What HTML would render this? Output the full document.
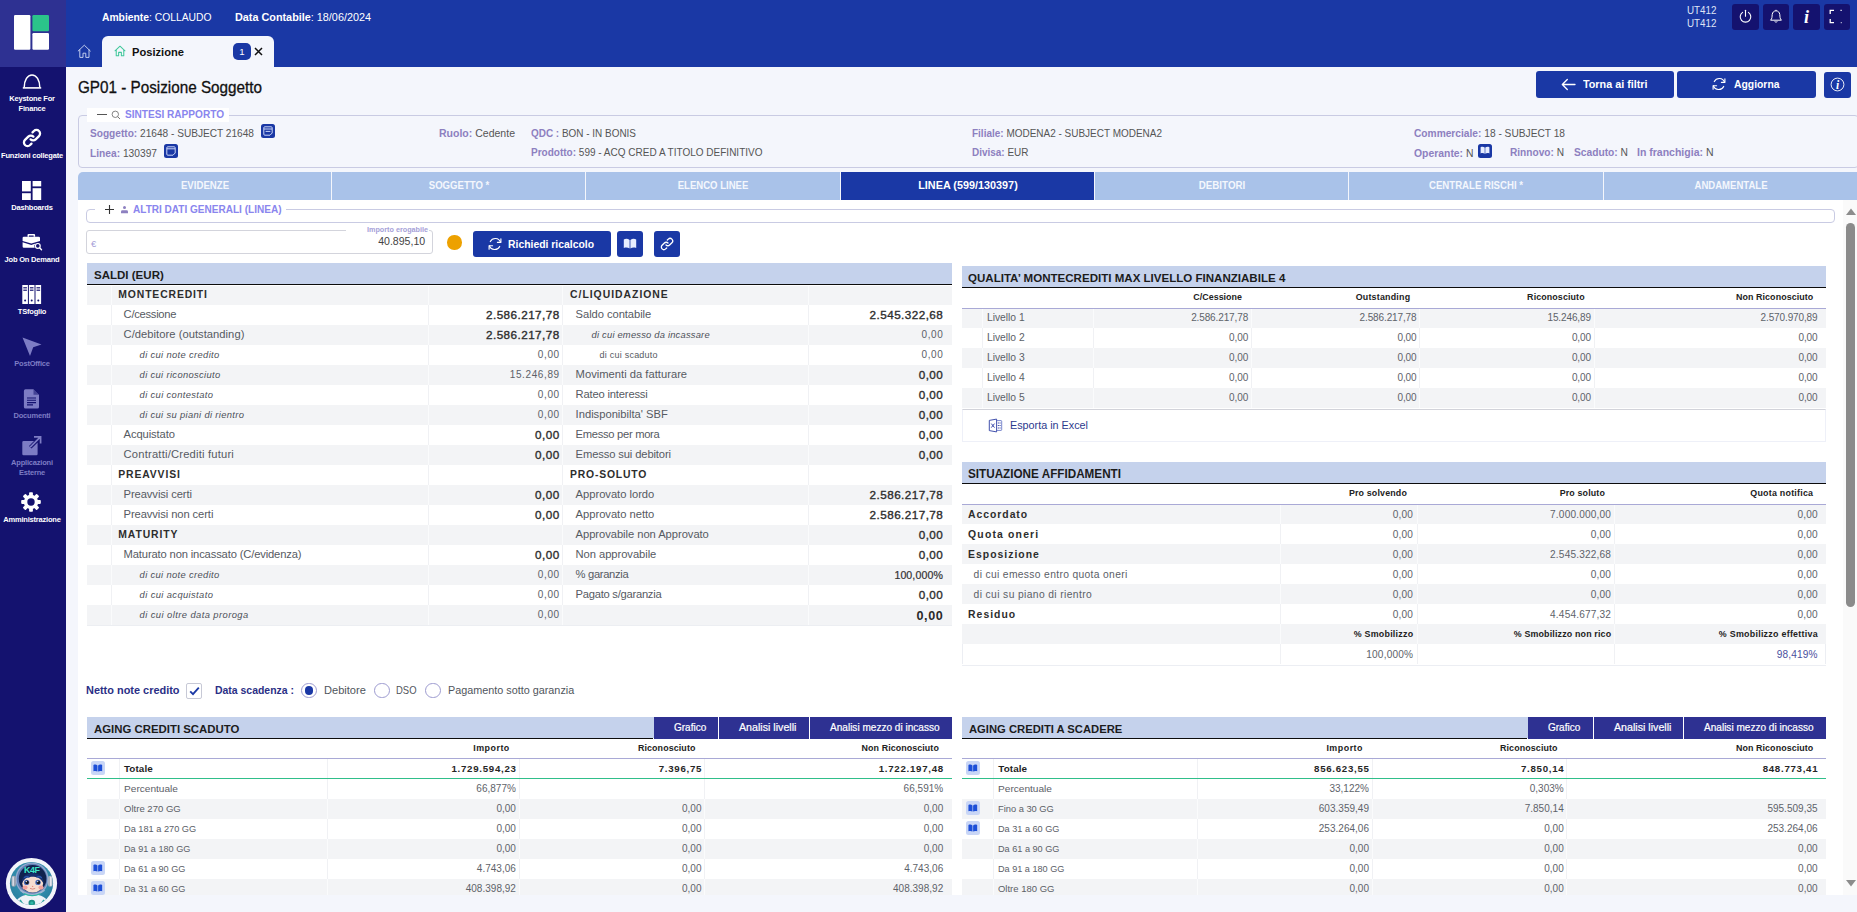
<!DOCTYPE html>
<html lang="it"><head><meta charset="utf-8"><title>GP01 - Posizione Soggetto</title>
<style>
*{box-sizing:border-box}
html,body{margin:0;padding:0}
body{width:1857px;height:912px;overflow:hidden;background:#f4f6fc;font-family:"Liberation Sans",sans-serif;color:#444;position:relative;font-size:11px}
.abs,.b,svg{position:absolute}
#logo{left:0;top:0;width:66px;height:67px;background:#2e3192}
#side{left:0;top:67px;width:66px;height:845px;background:#14126f}
#head{left:66px;top:0;width:1791px;height:67px;background:#1a38a5}
.sbl{position:absolute;left:0;width:64px;text-align:center;color:#fff;font-weight:700;font-size:7.5px;line-height:10px;letter-spacing:-0.2px;white-space:nowrap}
.sbl.dim{color:#7d7cc4}
.hb{position:absolute;top:4px;height:26px;background:#14126f;border-radius:3px}
.btn{position:absolute;background:#1a38a5;border-radius:3px}
.t{position:absolute;white-space:nowrap;line-height:1}
.g{background:#f3f4f6}
.vs{position:absolute;width:1px;background:#fff}
</style></head>
<body>
<div id="logo" class="abs"></div>
<svg class="abs" style="left:0;top:0" width="66" height="67" viewBox="0 0 66 67">
<rect x="14" y="15" width="16.4" height="34.8" rx="1.2" fill="#fff"/>
<rect x="32.4" y="15" width="16.6" height="16.2" rx="1.2" fill="#2bc48a"/>
<rect x="32.4" y="33" width="16.6" height="16.8" rx="1.2" fill="#fff"/>
</svg>
<div id="side" class="abs"></div>
<div id="head" class="abs"></div>
<svg class="abs" style="left:22px;top:73px" width="20" height="20" viewBox="0 0 20 20"><path d="M2.2 14.6 C2.2 7 5.6 2 10 2 C14.4 2 17.8 7 17.8 14.6" fill="none" stroke="#fff" stroke-width="1.5"/><path d="M0.8 14.9 H19.2" stroke="#fff" stroke-width="1.6" fill="none"/></svg>
<div class="sbl" style="top:94px">Keystone For<br>Finance</div>
<svg class="abs" style="left:22px;top:128px" width="20" height="20" viewBox="0 0 20 20"><g fill="none" stroke="#fff" stroke-width="2.3" stroke-linecap="round"><path d="M8.6 11.4 a3.6 3.6 0 0 0 5.1 0 l3.3-3.3 a3.6 3.6 0 0 0-5.1-5.1 l-1.4 1.4"/><path d="M11.4 8.6 a3.6 3.6 0 0 0-5.1 0 l-3.3 3.3 a3.6 3.6 0 0 0 5.1 5.1 l1.4-1.4"/></g></svg>
<div class="sbl" style="top:151px">Funzioni collegate</div>
<svg class="abs" style="left:22px;top:181px" width="20" height="20" viewBox="0 0 20 20"><g fill="#fff"><rect x="0" y="0" width="8.8" height="10.4"/><rect x="10.6" y="0" width="8.6" height="5.4"/><rect x="0" y="12.2" width="8.8" height="6.8"/><rect x="10.6" y="7.2" width="8.6" height="11.8"/></g></svg>
<div class="sbl" style="top:203px">Dashboards</div>
<svg class="abs" style="left:22px;top:233px" width="21" height="20" viewBox="0 0 20 20"><g fill="#fff"><path d="M6 1 h5.6 a1 1 0 0 1 1 1 V3.8 h-1.5 V2.5 h-4.6 V3.8 H5 V2 a1 1 0 0 1 1-1z"/><path d="M1.4 3.8 h14.8 a1.3 1.3 0 0 1 1.3 1.3 V8 L8.8 10.6 L0.1 8 V5.1 A1.3 1.3 0 0 1 1.4 3.8z"/><path d="M0.1 9.3 L8.8 11.9 L13 10.6 a3.6 3.6 0 0 0 -0.8 4.2 H1.4 a1.3 1.3 0 0 1-1.3-1.3z"/></g><circle cx="15.3" cy="12.9" r="2.4" fill="#14126f" stroke="#fff" stroke-width="1.2"/><path d="M17.1 14.8 L19 16.8" stroke="#fff" stroke-width="1.4" stroke-linecap="round"/></svg>
<div class="sbl" style="top:255px">Job On Demand</div>
<svg class="abs" style="left:22px;top:285px" width="20" height="20" viewBox="0 0 20 20"><rect x="0.3" y="0" width="5.6" height="19" fill="#fff"/><rect x="1.3" y="2.2" width="3.6" height="1.2" fill="#14126f"/><rect x="1.3" y="4.6" width="3.6" height="1.2" fill="#14126f"/><circle cx="3.0999999999999996" cy="15.5" r="1" fill="#14126f"/><rect x="6.8999999999999995" y="0" width="5.6" height="19" fill="#fff"/><rect x="7.8999999999999995" y="2.2" width="3.6" height="1.2" fill="#14126f"/><rect x="7.8999999999999995" y="4.6" width="3.6" height="1.2" fill="#14126f"/><circle cx="9.7" cy="15.5" r="1" fill="#14126f"/><rect x="13.5" y="0" width="5.6" height="19" fill="#fff"/><rect x="14.5" y="2.2" width="3.6" height="1.2" fill="#14126f"/><rect x="14.5" y="4.6" width="3.6" height="1.2" fill="#14126f"/><circle cx="16.3" cy="15.5" r="1" fill="#14126f"/></svg>
<div class="sbl" style="top:307px">TSfoglio</div>
<svg class="abs" style="left:22px;top:337px" width="20" height="20" viewBox="0 0 20 20"><path d="M0.5 0.5 L19.5 7.5 L11.2 10.3 L8 19 Z" fill="#7d7cc4"/></svg>
<div class="sbl dim" style="top:359px">PostOffice</div>
<svg class="abs" style="left:22px;top:389px" width="20" height="20" viewBox="0 0 20 20"><path d="M3.5 0.3 H11.5 L17 5.8 V18 a1.6 1.6 0 0 1-1.6 1.6 H3.5 A1.6 1.6 0 0 1 1.9 18 V1.9 A1.6 1.6 0 0 1 3.5 0.3z" fill="#7d7cc4"/><path d="M11.5 0.3 V5.8 H17" fill="#14126f" opacity="0.55"/><g stroke="#14126f" stroke-width="1.1"><path d="M5 9 h9M5 11.3 h9M5 13.6 h9M5 15.9 h6"/></g></svg>
<div class="sbl dim" style="top:411px">Documenti</div>
<svg class="abs" style="left:22px;top:436px" width="20" height="20" viewBox="0 0 20 20"><path d="M1.6 5 H12 L7 10 L9.5 12.5 L15.6 6.4 V18 a1.3 1.3 0 0 1-1.3 1.3 H1.6 A1.3 1.3 0 0 1 0.3 18 V6.3 A1.3 1.3 0 0 1 1.6 5z" fill="#7d7cc4"/><path d="M8.2 11.2 L18.2 1.2 M12 0.9 H18.6 V7.5" fill="none" stroke="#7d7cc4" stroke-width="1.7"/></svg>
<div class="sbl dim" style="top:458px">Applicazioni<br>Esterne</div>
<svg class="abs" style="left:21px;top:492px" width="20" height="20" viewBox="0 0 20 20"><rect x="8.1" y="0.2" width="3.8" height="5" rx="0.8" transform="rotate(0 10 10)" fill="#fff"/><rect x="8.1" y="0.2" width="3.8" height="5" rx="0.8" transform="rotate(45 10 10)" fill="#fff"/><rect x="8.1" y="0.2" width="3.8" height="5" rx="0.8" transform="rotate(90 10 10)" fill="#fff"/><rect x="8.1" y="0.2" width="3.8" height="5" rx="0.8" transform="rotate(135 10 10)" fill="#fff"/><rect x="8.1" y="0.2" width="3.8" height="5" rx="0.8" transform="rotate(180 10 10)" fill="#fff"/><rect x="8.1" y="0.2" width="3.8" height="5" rx="0.8" transform="rotate(225 10 10)" fill="#fff"/><rect x="8.1" y="0.2" width="3.8" height="5" rx="0.8" transform="rotate(270 10 10)" fill="#fff"/><rect x="8.1" y="0.2" width="3.8" height="5" rx="0.8" transform="rotate(315 10 10)" fill="#fff"/><circle cx="10" cy="10" r="7.2" fill="#fff"/><circle cx="10" cy="10" r="3.7" fill="#14126f"/><circle cx="10" cy="10" r="2" fill="none" stroke="#fff" stroke-width="0"/></svg>
<div class="sbl" style="top:515px">Amministrazione</div>
<svg style="left:5px;top:857px" width="53" height="53" viewBox="0 0 53 53">
<defs><clipPath id="avc"><circle cx="26.5" cy="26.5" r="21.6"/></clipPath>
<radialGradient id="avg" cx="50%" cy="40%" r="60%"><stop offset="0" stop-color="#3aa0bf"/><stop offset="1" stop-color="#2a7f9f"/></radialGradient></defs>
<circle cx="26.5" cy="26.5" r="25.6" fill="#f3f5fb"/>
<circle cx="26.5" cy="26.5" r="21.6" fill="url(#avg)"/>
<g clip-path="url(#avc)">
<path d="M8 53 C9 42 16 37.5 27 37.5 C38 37.5 45 42 46 53z" fill="#eef2f7"/>
<path d="M15 43 l4 6 M39 43 l-4 6" stroke="#2aa6a0" stroke-width="1.6"/>
<path d="M13.5 46 l2 5 M40.5 46 l-2 5" stroke="#1d3f7a" stroke-width="1.6"/>
<circle cx="26.8" cy="46" r="3.3" fill="#1f8f86"/><circle cx="26.8" cy="46" r="1.6" fill="#2fb7a6"/>
<circle cx="27" cy="22" r="16.6" fill="#93a9cf"/>
<circle cx="27" cy="22" r="15.2" fill="#5f7fb5"/>
<circle cx="27.6" cy="21.8" r="13.8" fill="#10224e"/>
<rect x="6.4" y="18.8" width="4.6" height="11" rx="2.2" fill="#9aa3b3"/><rect x="7.4" y="19.6" width="1.6" height="9.4" rx="0.8" fill="#d5dae4"/>
<rect x="43" y="18.8" width="4.6" height="11" rx="2.2" fill="#aab2c2"/><rect x="45" y="19.6" width="1.6" height="9.4" rx="0.8" fill="#e3e7ef"/>
<ellipse cx="27.7" cy="26.4" rx="10.4" ry="9.2" fill="#f6dccf"/>
<path d="M16.8 26 C16 12.5 39.4 12.5 38.6 26 C35 20.6 31 19.8 27.7 19.8 C24 19.8 20 20.6 16.8 26z" fill="#16306e"/>
<path d="M19 20.6 q3-2 5.4 0 M31.4 20.4 q3-1.8 5.4 0.4" stroke="#2c58b0" stroke-width="1.1" fill="none"/>
<circle cx="21.6" cy="25.4" r="2.7" fill="#4a6fc0"/><circle cx="33" cy="25.4" r="2.7" fill="#4a6fc0"/>
<circle cx="22" cy="25.4" r="1.8" fill="#14161f"/><circle cx="33.4" cy="25.4" r="1.8" fill="#14161f"/>
<circle cx="21.3" cy="24.6" r="0.7" fill="#fff"/><circle cx="32.7" cy="24.6" r="0.7" fill="#fff"/>
<ellipse cx="20" cy="30.6" rx="2.6" ry="2.1" fill="#f0a39e"/><ellipse cx="36" cy="30.6" rx="2.6" ry="2.1" fill="#f0a39e"/>
<circle cx="27.6" cy="29.4" r="0.7" fill="#e98d86"/>
<path d="M25 31.4 Q27.6 32.8 30.2 31.4" stroke="#cf6a63" stroke-width="0.7" fill="none"/>
<path d="M15.4 33 Q27 42.5 39.4 33" stroke="#9fb4d2" stroke-width="2" fill="none"/>
<path d="M19 36.6 Q27 40.6 35.6 36.6" stroke="#2fb7a6" stroke-width="1.2" fill="none"/>
</g>
<text x="26.8" y="16.2" text-anchor="middle" font-family="Liberation Sans, sans-serif" font-weight="700" font-size="8.8" fill="#3fe6c8" letter-spacing="-0.3">K4F</text>
</svg>
<div class="t" style="left:101.5px;top:13px;font-size:10.4px;color:#fff;transform:scaleX(0.9929);transform-origin:0 50%;"><b>Ambiente</b>: COLLAUDO</div>
<div class="t" style="left:235px;top:13px;font-size:10.4px;color:#fff;transform:scaleX(1.0419);transform-origin:0 50%;"><b>Data Contabile</b>: 18/06/2024</div>
<svg style="left:77px;top:44px" width="14" height="14" viewBox="0 0 14 14"><path d="M1.2 7 L7.3 1.2 L13.3 7 M2.8 5.8 V13.4 H6 V9.2 H8.8 V13.4 H12 V5.8" fill="none" stroke="#d3dbf5" stroke-width="0.9" stroke-linejoin="round" stroke-linecap="round"/></svg>
<div class="abs" style="left:102px;top:36px;width:172px;height:31px;background:#f4f6fc;border-radius:6px 6px 0 0"></div>
<svg style="left:114px;top:45px" width="12" height="12" viewBox="0 0 14 14"><path d="M1.2 6.8 L7 1.4 L12.8 6.8 M2.6 5.8 V12.6 H5.4 V8.6 H8.6 V12.6 H11.4 V5.8" fill="none" stroke="#3fc79a" stroke-width="1.2" stroke-linejoin="round" stroke-linecap="round"/></svg>
<div class="t" style="left:132px;top:47px;font-size:11.2px;font-weight:700;color:#111;transform:scaleX(0.9958);transform-origin:0 50%;">Posizione</div>
<div class="abs" style="left:233px;top:43px;width:18px;height:17px;background:#1a38a5;border-radius:5px"></div>
<div class="t" style="left:242px;top:47px;font-size:9.6px;color:#fff;transform:translateX(-50%);transform-origin:50% 50%;">1</div>
<svg style="left:254px;top:47px" width="9" height="9" viewBox="0 0 9 9"><path d="M1 1 L8 8 M8 1 L1 8" stroke="#111" stroke-width="1.5"/></svg>
<div class="t" style="left:1686.5px;top:5px;font-size:11px;color:#dfe4f6;transform:scaleX(0.8931);transform-origin:0 50%;">UT412</div>
<div class="t" style="left:1686.5px;top:18px;font-size:11px;color:#dfe4f6;transform:scaleX(0.8931);transform-origin:0 50%;">UT412</div>
<div class="hb" style="left:1732px;width:27px"></div>
<div class="hb" style="left:1763px;width:26px"></div>
<div class="hb" style="left:1793px;width:27px"></div>
<div class="hb" style="left:1824px;width:26px"></div>
<svg style="left:1738px;top:9px" width="15" height="15" viewBox="0 0 15 15"><path d="M4.6 3.4 A5.3 5.3 0 1 0 10.4 3.4" fill="none" stroke="#fff" stroke-width="1.1" stroke-linecap="round"/><path d="M7.5 1.2 V7.2" stroke="#fff" stroke-width="1.1" stroke-linecap="round"/></svg>
<svg style="left:1769px;top:9px" width="14" height="15" viewBox="0 0 14 15"><path d="M1.6 11.2 C3.2 9.6 3 7.6 3.2 5.6 C3.5 3.2 5 1.8 7 1.8 C9 1.8 10.5 3.2 10.8 5.6 C11 7.6 10.8 9.6 12.4 11.2 Z" fill="none" stroke="#fff" stroke-width="1" stroke-linejoin="round"/><path d="M5.8 12.4 A1.3 1.3 0 0 0 8.2 12.4" fill="none" stroke="#fff" stroke-width="1"/><path d="M7 0.8 V1.8" stroke="#fff" stroke-width="1"/></svg>
<div class="t" style="left:1806.5px;top:8px;font-size:18px;font-weight:700;color:#fff;font-style:italic;transform:translateX(-50%);transform-origin:50% 50%;font-family:'Liberation Serif',serif;">i</div>
<svg style="left:1829px;top:9px" width="16" height="15" viewBox="0 0 16 15"><path d="M1.2 5 V1.4 H5 M11.5 1.4 H12.7 M1.2 10 V13.6 H5 M11.8 13.6 H12.6" fill="none" stroke="#fff" stroke-width="1.3"/></svg>
<div class="t" style="left:78px;top:79px;font-size:16.2px;color:#111;transform:scaleX(0.9422);transform-origin:0 50%;-webkit-text-stroke:0.3px #111;">GP01 - Posizione Soggetto</div>
<div class="b" style="left:1536px;top:71px;width:138px;height:27px;background:#1a38a5;border-radius:3px"></div>
<div class="b" style="left:1677px;top:71px;width:139px;height:27px;background:#1a38a5;border-radius:3px"></div>
<div class="b" style="left:1824px;top:72px;width:27px;height:26px;background:#1a38a5;border-radius:3px"></div>
<svg style="left:1561px;top:78px" width="15" height="13" viewBox="0 0 15 13"><path d="M14 6.5 H1.5 M6.3 1.5 L1.3 6.5 L6.3 11.5" fill="none" stroke="#fff" stroke-width="1.3" stroke-linecap="round" stroke-linejoin="round"/></svg>
<div class="t" style="left:1583px;top:79px;font-size:11px;font-weight:700;color:#fff;transform:scaleX(0.9801);transform-origin:0 50%;">Torna ai filtri</div>
<svg style="left:1712px;top:77px" width="14" height="14" viewBox="0 0 14 14"><path d="M12.6 5.2 A5.6 5.6 0 0 0 2.3 4.6 M1.4 8.8 A5.6 5.6 0 0 0 11.7 9.4" fill="none" stroke="#fff" stroke-width="1.15" stroke-linecap="round"/><path d="M12.9 1.8 V5.3 H9.4 M1.1 12.2 V8.7 H4.6" fill="none" stroke="#fff" stroke-width="1.15" stroke-linecap="round" stroke-linejoin="round"/></svg>
<div class="t" style="left:1734px;top:79px;font-size:11px;font-weight:700;color:#fff;transform:scaleX(0.9424);transform-origin:0 50%;">Aggiorna</div>
<svg style="left:1830px;top:77px" width="15" height="15" viewBox="0 0 15 15"><circle cx="7.5" cy="7.5" r="6.4" fill="none" stroke="#fff" stroke-width="0.9"/></svg>
<div class="t" style="left:1837.6px;top:80px;font-size:11.5px;font-weight:700;color:#fff;font-style:italic;transform:translateX(-50%);transform-origin:50% 50%;font-family:'Liberation Serif',serif;">i</div>
<div class="b" style="left:78px;top:115px;width:1781px;height:53px;border:1px solid #c9cbe3;border-radius:4px"></div>
<div class="b" style="left:87px;top:108px;width:142px;height:14px;background:#fff;"></div>
<div class="b" style="left:97px;top:113.6px;width:9.5px;height:1.3px;background:#555;"></div>
<svg style="left:111px;top:109.5px" width="10" height="10" viewBox="0 0 10 10"><circle cx="4.3" cy="4.3" r="3.2" fill="none" stroke="#666" stroke-width="0.8"/><path d="M6.7 6.7 L9 9" stroke="#666" stroke-width="0.9"/></svg>
<div class="t" style="left:125px;top:109px;font-size:11px;font-weight:700;color:#8a86ee;transform:scaleX(0.9168);transform-origin:0 50%;">SINTESI RAPPORTO</div>
<div class="t" style="left:90px;top:128px;font-size:10.6px;color:#555;transform:scaleX(0.9549);transform-origin:0 50%;"><b style="color:#8d80c0;font-weight:700">Soggetto:</b> <span>21648 - SUBJECT 21648</span></div>
<div class="t" style="left:90px;top:148px;font-size:10.6px;color:#555;transform:scaleX(0.9638);transform-origin:0 50%;"><b style="color:#8d80c0;font-weight:700">Linea:</b> <span>130397</span></div>
<div class="t" style="left:438.5px;top:128px;font-size:10.6px;color:#555;transform:scaleX(0.9927);transform-origin:0 50%;"><b style="color:#8d80c0;font-weight:700">Ruolo:</b> <span>Cedente</span></div>
<div class="t" style="left:531px;top:128px;font-size:10.6px;color:#555;transform:scaleX(0.9388);transform-origin:0 50%;"><b style="color:#8d80c0;font-weight:700">QDC :</b> <span>BON - IN BONIS</span></div>
<div class="t" style="left:531px;top:147px;font-size:10.6px;color:#555;transform:scaleX(0.9445);transform-origin:0 50%;"><b style="color:#8d80c0;font-weight:700">Prodotto:</b> <span>599 - ACQ CRED A TITOLO DEFINITIVO</span></div>
<div class="t" style="left:972px;top:128px;font-size:10.6px;color:#555;transform:scaleX(0.9418);transform-origin:0 50%;"><b style="color:#8d80c0;font-weight:700">Filiale:</b> <span>MODENA2 - SUBJECT MODENA2</span></div>
<div class="t" style="left:972px;top:147px;font-size:10.6px;color:#555;transform:scaleX(0.9404);transform-origin:0 50%;"><b style="color:#8d80c0;font-weight:700">Divisa:</b> <span>EUR</span></div>
<div class="t" style="left:1413.5px;top:128px;font-size:10.6px;color:#555;transform:scaleX(0.9616);transform-origin:0 50%;"><b style="color:#8d80c0;font-weight:700">Commerciale:</b> <span>18 - SUBJECT 18</span></div>
<div class="t" style="left:1413.5px;top:148px;font-size:10.6px;color:#555;transform:scaleX(0.9809);transform-origin:0 50%;"><b style="color:#8d80c0;font-weight:700">Operante:</b> <span>N</span></div>
<div class="t" style="left:1509.5px;top:147px;font-size:10.6px;color:#555;transform:scaleX(0.9555);transform-origin:0 50%;"><b style="color:#8d80c0;font-weight:700">Rinnovo:</b> <span>N</span></div>
<div class="t" style="left:1573.5px;top:147px;font-size:10.6px;color:#555;transform:scaleX(0.9654);transform-origin:0 50%;"><b style="color:#8d80c0;font-weight:700">Scaduto:</b> <span>N</span></div>
<div class="t" style="left:1637px;top:147px;font-size:10.6px;color:#555;transform:scaleX(0.9919);transform-origin:0 50%;"><b style="color:#8d80c0;font-weight:700">In franchigia:</b> <span>N</span></div>
<div class="b" style="left:261px;top:124px;width:14px;height:14px;background:#1a38a5;border-radius:2.5px"></div>
<svg style="left:263px;top:126px" width="10" height="10" viewBox="0 0 10 10"><path d="M0.8 1.8 a1 1 0 0 1 1-1 h6.4 a1 1 0 0 1 1 1 V7 L7 9.2 H1.8 a1 1 0 0 1 -1-1z" fill="none" stroke="#dfe6ff" stroke-width="0.9"/><path d="M1 3 H9 M2.6 5.4 H7.4" stroke="#dfe6ff" stroke-width="0.9"/></svg>
<div class="b" style="left:164px;top:144px;width:14px;height:14px;background:#1a38a5;border-radius:2.5px"></div>
<svg style="left:166px;top:146px" width="10" height="10" viewBox="0 0 10 10"><path d="M0.8 1.8 a1 1 0 0 1 1-1 h6.4 a1 1 0 0 1 1 1 V7 L7 9.2 H1.8 a1 1 0 0 1 -1-1z" fill="none" stroke="#dfe6ff" stroke-width="0.9"/><path d="M1 2.8 H9" stroke="#dfe6ff" stroke-width="0.9"/></svg>
<div class="b" style="left:1478px;top:143.5px;width:14px;height:14px;background:#1a38a5;border-radius:2.5px"></div>
<svg style="left:1480px;top:146.0px" width="10" height="9" viewBox="0 0 10 9"><path d="M0.6 1.2 C2 0.6 3.6 0.7 4.7 1.6 V7.8 C3.6 7 2 6.9 0.6 7.4z M9.4 1.2 C8 0.6 6.4 0.7 5.3 1.6 V7.8 C6.4 7 8 6.9 9.4 7.4z" fill="#e8eeff"/></svg>
<div class="b" style="left:78px;top:172px;width:253px;height:28px;background:#a9c2e9;border-radius:5px 0 0 0;"></div>
<div class="t" style="left:204.5px;top:179px;font-size:11.6px;font-weight:700;color:#f4f7fd;transform:translateX(-50%) scaleX(0.8313);transform-origin:50% 50%;">EVIDENZE</div>
<div class="b" style="left:332px;top:172px;width:253px;height:28px;background:#a9c2e9;"></div>
<div class="t" style="left:458.5px;top:179px;font-size:11.6px;font-weight:700;color:#f4f7fd;transform:translateX(-50%) scaleX(0.8261);transform-origin:50% 50%;">SOGGETTO *</div>
<div class="b" style="left:586px;top:172px;width:254px;height:28px;background:#a9c2e9;"></div>
<div class="t" style="left:713.0px;top:179px;font-size:11.6px;font-weight:700;color:#f4f7fd;transform:translateX(-50%) scaleX(0.8228);transform-origin:50% 50%;">ELENCO LINEE</div>
<div class="b" style="left:841px;top:172px;width:253px;height:28px;background:#1a38a5;"></div>
<div class="t" style="left:967.5px;top:179px;font-size:11.6px;font-weight:700;color:#fff;transform:translateX(-50%) scaleX(0.9339);transform-origin:50% 50%;">LINEA (599/130397)</div>
<div class="b" style="left:1095px;top:172px;width:253px;height:28px;background:#a9c2e9;"></div>
<div class="t" style="left:1221.5px;top:179px;font-size:11.6px;font-weight:700;color:#f4f7fd;transform:translateX(-50%) scaleX(0.8426);transform-origin:50% 50%;">DEBITORI</div>
<div class="b" style="left:1349px;top:172px;width:254px;height:28px;background:#a9c2e9;"></div>
<div class="t" style="left:1476.0px;top:179px;font-size:11.6px;font-weight:700;color:#f4f7fd;transform:translateX(-50%) scaleX(0.8291);transform-origin:50% 50%;">CENTRALE RISCHI *</div>
<div class="b" style="left:1604px;top:172px;width:254px;height:28px;background:#a9c2e9;"></div>
<div class="t" style="left:1731.0px;top:179px;font-size:11.6px;font-weight:700;color:#f4f7fd;transform:translateX(-50%) scaleX(0.8233);transform-origin:50% 50%;">ANDAMENTALE</div>
<div class="b" style="left:78px;top:200px;width:1765px;height:695px;background:#fff;"></div>
<div class="b" style="left:1843.3px;top:200px;width:13.7px;height:695px;background:#fafafa;"></div>
<svg style="left:1845.5px;top:208px" width="10" height="7" viewBox="0 0 10 7"><path d="M0 7 L5 0.4 L10 7z" fill="#8c8c8c"/></svg>
<div class="b" style="left:1846px;top:223px;width:9px;height:384px;background:#8b8b8b;border-radius:4.5px"></div>
<svg style="left:1845.5px;top:880px" width="10" height="7" viewBox="0 0 10 7"><path d="M0 0 L5 6.6 L10 0z" fill="#8c8c8c"/></svg>
<div class="b" style="left:86px;top:209px;width:1749px;height:14px;border:1px solid #c9cbe3;border-radius:4px"></div>
<div class="b" style="left:95px;top:203px;width:191px;height:13px;background:#fff;"></div>
<svg style="left:104px;top:204px" width="11" height="11" viewBox="0 0 11 11"><path d="M5.5 1 V10 M1 5.5 H10" stroke="#333" stroke-width="1.1"/></svg>
<svg style="left:120px;top:205px" width="9" height="9" viewBox="0 0 9 9"><circle cx="4.5" cy="2.6" r="1.5" fill="#8d80c0"/><path d="M1 8.2 V6.6 a1.4 1.4 0 0 1 1.4-1.4 h4.2 a1.4 1.4 0 0 1 1.4 1.4 V8.2z" fill="#8d80c0"/></svg>
<div class="t" style="left:132.6px;top:204px;font-size:11px;font-weight:700;color:#8a86ee;transform:scaleX(0.9124);transform-origin:0 50%;">ALTRI DATI GENERALI (LINEA)</div>
<div class="b" style="left:86px;top:229.5px;width:347px;height:24px;border:1px solid #d3d4dc;border-radius:3px;background:#fff"></div>
<div class="b" style="left:346px;top:228px;width:83px;height:4px;background:#fff;"></div>
<div class="t" style="left:367px;top:226px;font-size:7.2px;font-weight:700;color:#a69fd8;transform:scaleX(1.0049);transform-origin:0 50%;">Importo erogabile</div>
<div class="t" style="left:91px;top:239px;font-size:9.5px;color:#a69fd8;">€</div>
<div class="t" style="right:1432px;top:236px;font-size:10.6px;color:#444;transform:scaleX(0.997);transform-origin:100% 50%;">40.895,10</div>
<div class="b" style="left:447.2px;top:235.2px;width:14.4px;height:14.4px;border-radius:50%;background:#eda100"></div>
<div class="b" style="left:473px;top:231px;width:138px;height:26px;background:#1a38a5;border-radius:3px"></div>
<svg style="left:488px;top:237px" width="14" height="14" viewBox="0 0 14 14"><path d="M12.6 5.2 A5.6 5.6 0 0 0 2.3 4.6 M1.4 8.8 A5.6 5.6 0 0 0 11.7 9.4" fill="none" stroke="#fff" stroke-width="1.15" stroke-linecap="round"/><path d="M12.9 1.8 V5.3 H9.4 M1.1 12.2 V8.7 H4.6" fill="none" stroke="#fff" stroke-width="1.15" stroke-linecap="round" stroke-linejoin="round"/></svg>
<div class="t" style="left:508.3px;top:238px;font-size:11.7px;font-weight:700;color:#fff;transform:scaleX(0.8886);transform-origin:0 50%;">Richiedi ricalcolo</div>
<div class="b" style="left:617px;top:231px;width:26px;height:26px;background:#1a38a5;border-radius:3px"></div>
<svg style="left:623px;top:238px" width="14" height="12" viewBox="0 0 14 12"><path d="M0.8 1.4 C2.8 0.5 5 0.7 6.6 2 V10.6 C5 9.4 2.8 9.3 0.8 10z M13.2 1.4 C11.2 0.5 9 0.7 7.4 2 V10.6 C9 9.4 11.2 9.3 13.2 10z" fill="#e8eeff"/></svg>
<div class="b" style="left:654px;top:231px;width:26px;height:26px;background:#1a38a5;border-radius:3px"></div>
<svg style="left:660px;top:237px" width="14" height="14" viewBox="0 0 20 20"><g fill="none" stroke="#fff" stroke-width="1.9" stroke-linecap="round"><path d="M8.6 11.4 a3.6 3.6 0 0 0 5.1 0 l3.3-3.3 a3.6 3.6 0 0 0-5.1-5.1 l-1.4 1.4"/><path d="M11.4 8.6 a3.6 3.6 0 0 0-5.1 0 l-3.3 3.3 a3.6 3.6 0 0 0 5.1 5.1 l1.4-1.4"/></g></svg>
<div class="b" style="left:87px;top:263px;width:865px;height:21px;background:#c5d2ec;"></div>
<div class="b" style="left:87px;top:284px;width:865px;height:1px;background:#0c0c0c;"></div>
<div class="t" style="left:94px;top:269px;font-size:11.7px;font-weight:700;color:#1c1c1c;transform:scaleX(0.9861);transform-origin:0 50%;">SALDI (EUR)</div>
<div class="b" style="left:87px;top:286px;width:865px;height:19px;background:#f3f4f6;"></div>
<div class="vs" style="left:111px;top:286px;height:19px;background:#fafbfc"></div>
<div class="vs" style="left:428px;top:286px;height:19px;background:#fafbfc"></div>
<div class="vs" style="left:562px;top:286px;height:19px;background:#fafbfc"></div>
<div class="vs" style="left:808px;top:286px;height:19px;background:#fafbfc"></div>
<div class="vs" style="left:111px;top:305px;height:20px;background:#f0f1f4"></div>
<div class="vs" style="left:428px;top:305px;height:20px;background:#f0f1f4"></div>
<div class="vs" style="left:562px;top:305px;height:20px;background:#f0f1f4"></div>
<div class="vs" style="left:808px;top:305px;height:20px;background:#f0f1f4"></div>
<div class="b" style="left:87px;top:325px;width:865px;height:20px;background:#f3f4f6;"></div>
<div class="vs" style="left:111px;top:325px;height:20px;background:#fafbfc"></div>
<div class="vs" style="left:428px;top:325px;height:20px;background:#fafbfc"></div>
<div class="vs" style="left:562px;top:325px;height:20px;background:#fafbfc"></div>
<div class="vs" style="left:808px;top:325px;height:20px;background:#fafbfc"></div>
<div class="vs" style="left:111px;top:345px;height:20px;background:#f0f1f4"></div>
<div class="vs" style="left:428px;top:345px;height:20px;background:#f0f1f4"></div>
<div class="vs" style="left:562px;top:345px;height:20px;background:#f0f1f4"></div>
<div class="vs" style="left:808px;top:345px;height:20px;background:#f0f1f4"></div>
<div class="b" style="left:87px;top:365px;width:865px;height:20px;background:#f3f4f6;"></div>
<div class="vs" style="left:111px;top:365px;height:20px;background:#fafbfc"></div>
<div class="vs" style="left:428px;top:365px;height:20px;background:#fafbfc"></div>
<div class="vs" style="left:562px;top:365px;height:20px;background:#fafbfc"></div>
<div class="vs" style="left:808px;top:365px;height:20px;background:#fafbfc"></div>
<div class="vs" style="left:111px;top:385px;height:20px;background:#f0f1f4"></div>
<div class="vs" style="left:428px;top:385px;height:20px;background:#f0f1f4"></div>
<div class="vs" style="left:562px;top:385px;height:20px;background:#f0f1f4"></div>
<div class="vs" style="left:808px;top:385px;height:20px;background:#f0f1f4"></div>
<div class="b" style="left:87px;top:405px;width:865px;height:20px;background:#f3f4f6;"></div>
<div class="vs" style="left:111px;top:405px;height:20px;background:#fafbfc"></div>
<div class="vs" style="left:428px;top:405px;height:20px;background:#fafbfc"></div>
<div class="vs" style="left:562px;top:405px;height:20px;background:#fafbfc"></div>
<div class="vs" style="left:808px;top:405px;height:20px;background:#fafbfc"></div>
<div class="vs" style="left:111px;top:425px;height:20px;background:#f0f1f4"></div>
<div class="vs" style="left:428px;top:425px;height:20px;background:#f0f1f4"></div>
<div class="vs" style="left:562px;top:425px;height:20px;background:#f0f1f4"></div>
<div class="vs" style="left:808px;top:425px;height:20px;background:#f0f1f4"></div>
<div class="b" style="left:87px;top:445px;width:865px;height:20px;background:#f3f4f6;"></div>
<div class="vs" style="left:111px;top:445px;height:20px;background:#fafbfc"></div>
<div class="vs" style="left:428px;top:445px;height:20px;background:#fafbfc"></div>
<div class="vs" style="left:562px;top:445px;height:20px;background:#fafbfc"></div>
<div class="vs" style="left:808px;top:445px;height:20px;background:#fafbfc"></div>
<div class="vs" style="left:111px;top:465px;height:20px;background:#f0f1f4"></div>
<div class="vs" style="left:428px;top:465px;height:20px;background:#f0f1f4"></div>
<div class="vs" style="left:562px;top:465px;height:20px;background:#f0f1f4"></div>
<div class="vs" style="left:808px;top:465px;height:20px;background:#f0f1f4"></div>
<div class="b" style="left:87px;top:485px;width:865px;height:20px;background:#f3f4f6;"></div>
<div class="vs" style="left:111px;top:485px;height:20px;background:#fafbfc"></div>
<div class="vs" style="left:428px;top:485px;height:20px;background:#fafbfc"></div>
<div class="vs" style="left:562px;top:485px;height:20px;background:#fafbfc"></div>
<div class="vs" style="left:808px;top:485px;height:20px;background:#fafbfc"></div>
<div class="vs" style="left:111px;top:505px;height:20px;background:#f0f1f4"></div>
<div class="vs" style="left:428px;top:505px;height:20px;background:#f0f1f4"></div>
<div class="vs" style="left:562px;top:505px;height:20px;background:#f0f1f4"></div>
<div class="vs" style="left:808px;top:505px;height:20px;background:#f0f1f4"></div>
<div class="b" style="left:87px;top:525px;width:865px;height:20px;background:#f3f4f6;"></div>
<div class="vs" style="left:111px;top:525px;height:20px;background:#fafbfc"></div>
<div class="vs" style="left:428px;top:525px;height:20px;background:#fafbfc"></div>
<div class="vs" style="left:562px;top:525px;height:20px;background:#fafbfc"></div>
<div class="vs" style="left:808px;top:525px;height:20px;background:#fafbfc"></div>
<div class="vs" style="left:111px;top:545px;height:20px;background:#f0f1f4"></div>
<div class="vs" style="left:428px;top:545px;height:20px;background:#f0f1f4"></div>
<div class="vs" style="left:562px;top:545px;height:20px;background:#f0f1f4"></div>
<div class="vs" style="left:808px;top:545px;height:20px;background:#f0f1f4"></div>
<div class="b" style="left:87px;top:565px;width:865px;height:20px;background:#f3f4f6;"></div>
<div class="vs" style="left:111px;top:565px;height:20px;background:#fafbfc"></div>
<div class="vs" style="left:428px;top:565px;height:20px;background:#fafbfc"></div>
<div class="vs" style="left:562px;top:565px;height:20px;background:#fafbfc"></div>
<div class="vs" style="left:808px;top:565px;height:20px;background:#fafbfc"></div>
<div class="vs" style="left:111px;top:585px;height:20px;background:#f0f1f4"></div>
<div class="vs" style="left:428px;top:585px;height:20px;background:#f0f1f4"></div>
<div class="vs" style="left:562px;top:585px;height:20px;background:#f0f1f4"></div>
<div class="vs" style="left:808px;top:585px;height:20px;background:#f0f1f4"></div>
<div class="b" style="left:87px;top:605px;width:865px;height:20px;background:#f3f4f6;"></div>
<div class="vs" style="left:111px;top:605px;height:20px;background:#fafbfc"></div>
<div class="vs" style="left:428px;top:605px;height:20px;background:#fafbfc"></div>
<div class="vs" style="left:562px;top:605px;height:20px;background:#fafbfc"></div>
<div class="vs" style="left:808px;top:605px;height:20px;background:#fafbfc"></div>
<div class="b" style="left:87px;top:625px;width:865px;height:1px;background:#eceef2;"></div>
<div class="t" style="left:118.3px;top:290px;font-size:10.4px;font-weight:700;color:#2d2d2d;letter-spacing:0.867px;">MONTECREDITI</div>
<div class="t" style="left:570px;top:290px;font-size:10.4px;font-weight:700;color:#2d2d2d;letter-spacing:0.996px;">C/LIQUIDAZIONE</div>
<div class="t" style="left:123.6px;top:309px;font-size:11.2px;color:#565a62;letter-spacing:-0.274px;">C/cessione</div>
<div class="t" style="right:1297.8px;top:309px;font-size:11.7px;color:#2e2e2e;letter-spacing:0.45px;margin-right:-0.45px;-webkit-text-stroke:0.35px #2e2e2e;">2.586.217,78</div>
<div class="t" style="left:575.6px;top:309px;font-size:11.2px;color:#565a62;letter-spacing:-0.061px;">Saldo contabile</div>
<div class="t" style="right:914.2px;top:309px;font-size:11.7px;color:#2e2e2e;letter-spacing:0.45px;margin-right:-0.45px;-webkit-text-stroke:0.35px #2e2e2e;">2.545.322,68</div>
<div class="t" style="left:123.6px;top:329px;font-size:11.2px;color:#565a62;letter-spacing:0.032px;">C/debitore (outstanding)</div>
<div class="t" style="right:1297.8px;top:329px;font-size:11.7px;color:#2e2e2e;letter-spacing:0.45px;margin-right:-0.45px;-webkit-text-stroke:0.35px #2e2e2e;">2.586.217,78</div>
<div class="t" style="left:591.6px;top:330px;font-size:9.4px;color:#4c5058;letter-spacing:0.197px;font-style:italic;">di cui emesso da incassare</div>
<div class="t" style="right:914.2px;top:330px;font-size:10px;color:#5c6168;letter-spacing:0.62px;margin-right:-0.62px;">0,00</div>
<div class="t" style="left:139.6px;top:350px;font-size:9.4px;color:#4c5058;letter-spacing:0.343px;font-style:italic;">di cui note credito</div>
<div class="t" style="right:1297.8px;top:350px;font-size:10px;color:#5c6168;letter-spacing:0.62px;margin-right:-0.62px;">0,00</div>
<div class="t" style="left:599.6px;top:351px;font-size:9px;color:#565a62;letter-spacing:0.225px;">di cui scaduto</div>
<div class="t" style="right:914.2px;top:350px;font-size:10px;color:#5c6168;letter-spacing:0.62px;margin-right:-0.62px;">0,00</div>
<div class="t" style="left:139.6px;top:370px;font-size:9.4px;color:#4c5058;letter-spacing:0.341px;font-style:italic;">di cui riconosciuto</div>
<div class="t" style="right:1297.8px;top:370px;font-size:10px;color:#5c6168;letter-spacing:0.62px;margin-right:-0.62px;">15.246,89</div>
<div class="t" style="left:575.6px;top:369px;font-size:11.2px;color:#565a62;letter-spacing:0.009px;">Movimenti da fatturare</div>
<div class="t" style="right:914.2px;top:369px;font-size:11.7px;color:#2e2e2e;letter-spacing:0.45px;margin-right:-0.45px;-webkit-text-stroke:0.35px #2e2e2e;">0,00</div>
<div class="t" style="left:139.6px;top:390px;font-size:9.4px;color:#4c5058;letter-spacing:0.35px;font-style:italic;">di cui contestato</div>
<div class="t" style="right:1297.8px;top:390px;font-size:10px;color:#5c6168;letter-spacing:0.62px;margin-right:-0.62px;">0,00</div>
<div class="t" style="left:575.6px;top:389px;font-size:11.2px;color:#565a62;letter-spacing:-0.175px;">Rateo interessi</div>
<div class="t" style="right:914.2px;top:389px;font-size:11.7px;color:#2e2e2e;letter-spacing:0.45px;margin-right:-0.45px;-webkit-text-stroke:0.35px #2e2e2e;">0,00</div>
<div class="t" style="left:139.6px;top:410px;font-size:9.4px;color:#4c5058;letter-spacing:0.339px;font-style:italic;">di cui su piani di rientro</div>
<div class="t" style="right:1297.8px;top:410px;font-size:10px;color:#5c6168;letter-spacing:0.62px;margin-right:-0.62px;">0,00</div>
<div class="t" style="left:575.6px;top:409px;font-size:11.2px;color:#565a62;letter-spacing:-0.006px;">Indisponibilta' SBF</div>
<div class="t" style="right:914.2px;top:409px;font-size:11.7px;color:#2e2e2e;letter-spacing:0.45px;margin-right:-0.45px;-webkit-text-stroke:0.35px #2e2e2e;">0,00</div>
<div class="t" style="left:123.6px;top:429px;font-size:11.2px;color:#565a62;letter-spacing:-0.095px;">Acquistato</div>
<div class="t" style="right:1297.8px;top:429px;font-size:11.7px;color:#2e2e2e;letter-spacing:0.45px;margin-right:-0.45px;-webkit-text-stroke:0.35px #2e2e2e;">0,00</div>
<div class="t" style="left:575.6px;top:429px;font-size:11.2px;color:#565a62;letter-spacing:-0.293px;">Emesso per mora</div>
<div class="t" style="right:914.2px;top:429px;font-size:11.7px;color:#2e2e2e;letter-spacing:0.45px;margin-right:-0.45px;-webkit-text-stroke:0.35px #2e2e2e;">0,00</div>
<div class="t" style="left:123.6px;top:449px;font-size:11.2px;color:#565a62;letter-spacing:0.196px;">Contratti/Crediti futuri</div>
<div class="t" style="right:1297.8px;top:449px;font-size:11.7px;color:#2e2e2e;letter-spacing:0.45px;margin-right:-0.45px;-webkit-text-stroke:0.35px #2e2e2e;">0,00</div>
<div class="t" style="left:575.6px;top:449px;font-size:11.2px;color:#565a62;letter-spacing:-0.122px;">Emesso sui debitori</div>
<div class="t" style="right:914.2px;top:449px;font-size:11.7px;color:#2e2e2e;letter-spacing:0.45px;margin-right:-0.45px;-webkit-text-stroke:0.35px #2e2e2e;">0,00</div>
<div class="t" style="left:118.3px;top:470px;font-size:10.4px;font-weight:700;color:#2d2d2d;letter-spacing:0.859px;">PREAVVISI</div>
<div class="t" style="left:570px;top:470px;font-size:10.4px;font-weight:700;color:#2d2d2d;letter-spacing:0.801px;">PRO-SOLUTO</div>
<div class="t" style="left:123.6px;top:489px;font-size:11.2px;color:#565a62;letter-spacing:-0.089px;">Preavvisi certi</div>
<div class="t" style="right:1297.8px;top:489px;font-size:11.7px;color:#2e2e2e;letter-spacing:0.45px;margin-right:-0.45px;-webkit-text-stroke:0.35px #2e2e2e;">0,00</div>
<div class="t" style="left:575.6px;top:489px;font-size:11.2px;color:#565a62;letter-spacing:-0.02px;">Approvato lordo</div>
<div class="t" style="right:914.2px;top:489px;font-size:11.7px;color:#2e2e2e;letter-spacing:0.45px;margin-right:-0.45px;-webkit-text-stroke:0.35px #2e2e2e;">2.586.217,78</div>
<div class="t" style="left:123.6px;top:509px;font-size:11.2px;color:#565a62;letter-spacing:-0.09px;">Preavvisi non certi</div>
<div class="t" style="right:1297.8px;top:509px;font-size:11.7px;color:#2e2e2e;letter-spacing:0.45px;margin-right:-0.45px;-webkit-text-stroke:0.35px #2e2e2e;">0,00</div>
<div class="t" style="left:575.6px;top:509px;font-size:11.2px;color:#565a62;letter-spacing:-0.02px;">Approvato netto</div>
<div class="t" style="right:914.2px;top:509px;font-size:11.7px;color:#2e2e2e;letter-spacing:0.45px;margin-right:-0.45px;-webkit-text-stroke:0.35px #2e2e2e;">2.586.217,78</div>
<div class="t" style="left:118.3px;top:530px;font-size:10.4px;font-weight:700;color:#2d2d2d;letter-spacing:0.897px;">MATURITY</div>
<div class="t" style="left:575.6px;top:529px;font-size:11.2px;color:#565a62;letter-spacing:-0.046px;">Approvabile non Approvato</div>
<div class="t" style="right:914.2px;top:529px;font-size:11.7px;color:#2e2e2e;letter-spacing:0.45px;margin-right:-0.45px;-webkit-text-stroke:0.35px #2e2e2e;">0,00</div>
<div class="t" style="left:123.6px;top:549px;font-size:11.2px;color:#565a62;letter-spacing:-0.144px;">Maturato non incassato (C/evidenza)</div>
<div class="t" style="right:1297.8px;top:549px;font-size:11.7px;color:#2e2e2e;letter-spacing:0.45px;margin-right:-0.45px;-webkit-text-stroke:0.35px #2e2e2e;">0,00</div>
<div class="t" style="left:575.6px;top:549px;font-size:11.2px;color:#565a62;letter-spacing:-0.052px;">Non approvabile</div>
<div class="t" style="right:914.2px;top:549px;font-size:11.7px;color:#2e2e2e;letter-spacing:0.45px;margin-right:-0.45px;-webkit-text-stroke:0.35px #2e2e2e;">0,00</div>
<div class="t" style="left:139.6px;top:570px;font-size:9.4px;color:#4c5058;letter-spacing:0.343px;font-style:italic;">di cui note credito</div>
<div class="t" style="right:1297.8px;top:570px;font-size:10px;color:#5c6168;letter-spacing:0.62px;margin-right:-0.62px;">0,00</div>
<div class="t" style="left:575.6px;top:569px;font-size:11.2px;color:#565a62;letter-spacing:-0.328px;">% garanzia</div>
<div class="t" style="right:914.2px;top:570px;font-size:10.6px;color:#333;letter-spacing:0.1px;margin-right:-0.1px;-webkit-text-stroke:0.2px #333;">100,000%</div>
<div class="t" style="left:139.6px;top:590px;font-size:9.4px;color:#4c5058;letter-spacing:0.38px;font-style:italic;">di cui acquistato</div>
<div class="t" style="right:1297.8px;top:590px;font-size:10px;color:#5c6168;letter-spacing:0.62px;margin-right:-0.62px;">0,00</div>
<div class="t" style="left:575.6px;top:589px;font-size:11.2px;color:#565a62;letter-spacing:-0.258px;">Pagato s/garanzia</div>
<div class="t" style="right:914.2px;top:589px;font-size:11.7px;color:#2e2e2e;letter-spacing:0.45px;margin-right:-0.45px;-webkit-text-stroke:0.35px #2e2e2e;">0,00</div>
<div class="t" style="left:139.6px;top:610px;font-size:9.4px;color:#4c5058;letter-spacing:0.42px;font-style:italic;">di cui oltre data proroga</div>
<div class="t" style="right:1297.8px;top:610px;font-size:10px;color:#5c6168;letter-spacing:0.62px;margin-right:-0.62px;">0,00</div>
<div class="t" style="right:914.2px;top:610px;font-size:12.6px;font-weight:700;color:#2a2a2a;letter-spacing:0.6px;margin-right:-0.6px;">0,00</div>
<div class="b" style="left:962px;top:266px;width:864px;height:21px;background:#c5d2ec;"></div>
<div class="b" style="left:962px;top:287px;width:864px;height:1px;background:#0c0c0c;"></div>
<div class="t" style="left:968.2px;top:272px;font-size:11.7px;font-weight:700;color:#1c1c1c;transform:scaleX(0.9879);transform-origin:0 50%;">QUALITA’ MONTECREDITI MAX LIVELLO FINANZIABILE 4</div>
<div class="t" style="right:615.3px;top:293px;font-size:8.9px;font-weight:700;color:#222;letter-spacing:0.036px;margin-right:-0.3px;">C/Cessione</div>
<div class="t" style="right:447px;top:293px;font-size:8.9px;font-weight:700;color:#222;letter-spacing:0.212px;margin-right:-0.3px;">Outstanding</div>
<div class="t" style="right:272.6px;top:293px;font-size:8.9px;font-weight:700;color:#222;letter-spacing:0.115px;margin-right:-0.3px;">Riconosciuto</div>
<div class="t" style="right:44px;top:293px;font-size:8.9px;font-weight:700;color:#222;letter-spacing:0.085px;margin-right:-0.3px;">Non Riconosciuto</div>
<div class="b" style="left:962px;top:308px;width:864px;height:20px;background:#f3f4f6;"></div>
<div class="vs" style="left:982px;top:308px;height:20px;background:#fafbfc"></div>
<div class="vs" style="left:1093px;top:308px;height:20px;background:#fafbfc"></div>
<div class="vs" style="left:1251px;top:308px;height:20px;background:#fafbfc"></div>
<div class="vs" style="left:1419px;top:308px;height:20px;background:#fafbfc"></div>
<div class="vs" style="left:1594.3px;top:308px;height:20px;background:#fafbfc"></div>
<div class="vs" style="left:982px;top:328px;height:20px;background:#f0f1f4"></div>
<div class="vs" style="left:1093px;top:328px;height:20px;background:#f0f1f4"></div>
<div class="vs" style="left:1251px;top:328px;height:20px;background:#f0f1f4"></div>
<div class="vs" style="left:1419px;top:328px;height:20px;background:#f0f1f4"></div>
<div class="vs" style="left:1594.3px;top:328px;height:20px;background:#f0f1f4"></div>
<div class="b" style="left:962px;top:348px;width:864px;height:20px;background:#f3f4f6;"></div>
<div class="vs" style="left:982px;top:348px;height:20px;background:#fafbfc"></div>
<div class="vs" style="left:1093px;top:348px;height:20px;background:#fafbfc"></div>
<div class="vs" style="left:1251px;top:348px;height:20px;background:#fafbfc"></div>
<div class="vs" style="left:1419px;top:348px;height:20px;background:#fafbfc"></div>
<div class="vs" style="left:1594.3px;top:348px;height:20px;background:#fafbfc"></div>
<div class="vs" style="left:982px;top:368px;height:20px;background:#f0f1f4"></div>
<div class="vs" style="left:1093px;top:368px;height:20px;background:#f0f1f4"></div>
<div class="vs" style="left:1251px;top:368px;height:20px;background:#f0f1f4"></div>
<div class="vs" style="left:1419px;top:368px;height:20px;background:#f0f1f4"></div>
<div class="vs" style="left:1594.3px;top:368px;height:20px;background:#f0f1f4"></div>
<div class="b" style="left:962px;top:388px;width:864px;height:20px;background:#f3f4f6;"></div>
<div class="vs" style="left:982px;top:388px;height:20px;background:#fafbfc"></div>
<div class="vs" style="left:1093px;top:388px;height:20px;background:#fafbfc"></div>
<div class="vs" style="left:1251px;top:388px;height:20px;background:#fafbfc"></div>
<div class="vs" style="left:1419px;top:388px;height:20px;background:#fafbfc"></div>
<div class="vs" style="left:1594.3px;top:388px;height:20px;background:#fafbfc"></div>
<div class="b" style="left:962px;top:308px;width:864px;height:1px;background:#a9a9d6;"></div>
<div class="t" style="left:987px;top:313px;font-size:10.3px;color:#5b6067;letter-spacing:-0.02px;">Livello 1</div>
<div class="t" style="right:608.8px;top:313px;font-size:10px;color:#5e636a;letter-spacing:-0.12px;margin-right:0.12px;">2.586.217,78</div>
<div class="t" style="right:440.4px;top:313px;font-size:10px;color:#5e636a;letter-spacing:-0.12px;margin-right:0.12px;">2.586.217,78</div>
<div class="t" style="right:266px;top:313px;font-size:10px;color:#5e636a;letter-spacing:-0.12px;margin-right:0.12px;">15.246,89</div>
<div class="t" style="right:39.4px;top:313px;font-size:10px;color:#5e636a;letter-spacing:-0.12px;margin-right:0.12px;">2.570.970,89</div>
<div class="t" style="left:987px;top:333px;font-size:10.3px;color:#5b6067;letter-spacing:-0.02px;">Livello 2</div>
<div class="t" style="right:608.8px;top:333px;font-size:10px;color:#5e636a;letter-spacing:-0.12px;margin-right:0.12px;">0,00</div>
<div class="t" style="right:440.4px;top:333px;font-size:10px;color:#5e636a;letter-spacing:-0.12px;margin-right:0.12px;">0,00</div>
<div class="t" style="right:266px;top:333px;font-size:10px;color:#5e636a;letter-spacing:-0.12px;margin-right:0.12px;">0,00</div>
<div class="t" style="right:39.4px;top:333px;font-size:10px;color:#5e636a;letter-spacing:-0.12px;margin-right:0.12px;">0,00</div>
<div class="t" style="left:987px;top:353px;font-size:10.3px;color:#5b6067;letter-spacing:-0.02px;">Livello 3</div>
<div class="t" style="right:608.8px;top:353px;font-size:10px;color:#5e636a;letter-spacing:-0.12px;margin-right:0.12px;">0,00</div>
<div class="t" style="right:440.4px;top:353px;font-size:10px;color:#5e636a;letter-spacing:-0.12px;margin-right:0.12px;">0,00</div>
<div class="t" style="right:266px;top:353px;font-size:10px;color:#5e636a;letter-spacing:-0.12px;margin-right:0.12px;">0,00</div>
<div class="t" style="right:39.4px;top:353px;font-size:10px;color:#5e636a;letter-spacing:-0.12px;margin-right:0.12px;">0,00</div>
<div class="t" style="left:987px;top:373px;font-size:10.3px;color:#5b6067;letter-spacing:-0.02px;">Livello 4</div>
<div class="t" style="right:608.8px;top:373px;font-size:10px;color:#5e636a;letter-spacing:-0.12px;margin-right:0.12px;">0,00</div>
<div class="t" style="right:440.4px;top:373px;font-size:10px;color:#5e636a;letter-spacing:-0.12px;margin-right:0.12px;">0,00</div>
<div class="t" style="right:266px;top:373px;font-size:10px;color:#5e636a;letter-spacing:-0.12px;margin-right:0.12px;">0,00</div>
<div class="t" style="right:39.4px;top:373px;font-size:10px;color:#5e636a;letter-spacing:-0.12px;margin-right:0.12px;">0,00</div>
<div class="t" style="left:987px;top:393px;font-size:10.3px;color:#5b6067;letter-spacing:-0.02px;">Livello 5</div>
<div class="t" style="right:608.8px;top:393px;font-size:10px;color:#5e636a;letter-spacing:-0.12px;margin-right:0.12px;">0,00</div>
<div class="t" style="right:440.4px;top:393px;font-size:10px;color:#5e636a;letter-spacing:-0.12px;margin-right:0.12px;">0,00</div>
<div class="t" style="right:266px;top:393px;font-size:10px;color:#5e636a;letter-spacing:-0.12px;margin-right:0.12px;">0,00</div>
<div class="t" style="right:39.4px;top:393px;font-size:10px;color:#5e636a;letter-spacing:-0.12px;margin-right:0.12px;">0,00</div>
<div class="b" style="left:962px;top:409px;width:864px;height:33px;border:1px solid #eef0f8;border-top:1px solid #d2d3da"></div>
<svg style="left:988px;top:418px" width="15" height="15" viewBox="0 0 15 15"><path d="M1.3 2.4 L8.6 1.1 V13.9 L1.3 12.6 Z" fill="none" stroke="#3848a8" stroke-width="0.95" stroke-linejoin="round"/><path d="M3.3 5.6 L6.5 9.6 M6.5 5.6 L3.3 9.6" stroke="#3848a8" stroke-width="1"/><path d="M8.6 2.6 H13 a0.7 0.7 0 0 1 0.7 0.7 V11.7 a0.7 0.7 0 0 1 -0.7 0.7 H8.6" fill="none" stroke="#5868c0" stroke-width="0.8"/><path d="M9.8 5 h2.8 M9.8 7.5 h2.8 M9.8 10 h2.8" stroke="#3848a8" stroke-width="1.1" stroke-dasharray="1.1 0.6"/></svg>
<div class="t" style="left:1010px;top:420px;font-size:10.5px;color:#2c3a8e;transform:scaleX(1.028);transform-origin:0 50%;">Esporta in Excel</div>
<div class="b" style="left:962px;top:462px;width:864px;height:21px;background:#c5d2ec;"></div>
<div class="b" style="left:962px;top:483px;width:864px;height:1px;background:#0c0c0c;"></div>
<div class="t" style="left:968.2px;top:468px;font-size:12px;font-weight:700;color:#1c1c1c;transform:scaleX(0.9752);transform-origin:0 50%;">SITUAZIONE AFFIDAMENTI</div>
<div class="t" style="right:450.3px;top:489px;font-size:8.9px;font-weight:700;color:#222;letter-spacing:0.157px;margin-right:-0.3px;">Pro solvendo</div>
<div class="t" style="right:252.3px;top:489px;font-size:8.9px;font-weight:700;color:#222;letter-spacing:0.141px;margin-right:-0.3px;">Pro soluto</div>
<div class="t" style="right:44px;top:489px;font-size:8.9px;font-weight:700;color:#222;letter-spacing:0.238px;margin-right:-0.3px;">Quota notifica</div>
<div class="b" style="left:962px;top:504px;width:864px;height:20px;background:#f3f4f6;"></div>
<div class="vs" style="left:1279.8px;top:504px;height:20px;background:#fafbfc"></div>
<div class="vs" style="left:1416.5px;top:504px;height:20px;background:#fafbfc"></div>
<div class="vs" style="left:1614px;top:504px;height:20px;background:#fafbfc"></div>
<div class="vs" style="left:1279.8px;top:524px;height:20px;background:#f0f1f4"></div>
<div class="vs" style="left:1416.5px;top:524px;height:20px;background:#f0f1f4"></div>
<div class="vs" style="left:1614px;top:524px;height:20px;background:#f0f1f4"></div>
<div class="b" style="left:962px;top:544px;width:864px;height:20px;background:#f3f4f6;"></div>
<div class="vs" style="left:1279.8px;top:544px;height:20px;background:#fafbfc"></div>
<div class="vs" style="left:1416.5px;top:544px;height:20px;background:#fafbfc"></div>
<div class="vs" style="left:1614px;top:544px;height:20px;background:#fafbfc"></div>
<div class="vs" style="left:1279.8px;top:564px;height:20px;background:#f0f1f4"></div>
<div class="vs" style="left:1416.5px;top:564px;height:20px;background:#f0f1f4"></div>
<div class="vs" style="left:1614px;top:564px;height:20px;background:#f0f1f4"></div>
<div class="b" style="left:962px;top:584px;width:864px;height:20px;background:#f3f4f6;"></div>
<div class="vs" style="left:1279.8px;top:584px;height:20px;background:#fafbfc"></div>
<div class="vs" style="left:1416.5px;top:584px;height:20px;background:#fafbfc"></div>
<div class="vs" style="left:1614px;top:584px;height:20px;background:#fafbfc"></div>
<div class="vs" style="left:1279.8px;top:604px;height:20px;background:#f0f1f4"></div>
<div class="vs" style="left:1416.5px;top:604px;height:20px;background:#f0f1f4"></div>
<div class="vs" style="left:1614px;top:604px;height:20px;background:#f0f1f4"></div>
<div class="b" style="left:962px;top:624px;width:864px;height:20px;background:#f3f4f6;"></div>
<div class="vs" style="left:1279.8px;top:624px;height:20px;background:#fafbfc"></div>
<div class="vs" style="left:1416.5px;top:624px;height:20px;background:#fafbfc"></div>
<div class="vs" style="left:1614px;top:624px;height:20px;background:#fafbfc"></div>
<div class="vs" style="left:1279.8px;top:644px;height:20px;background:#f0f1f4"></div>
<div class="vs" style="left:1416.5px;top:644px;height:20px;background:#f0f1f4"></div>
<div class="vs" style="left:1614px;top:644px;height:20px;background:#f0f1f4"></div>
<div class="b" style="left:962px;top:504px;width:864px;height:1px;background:#a9a9d6;"></div>
<div class="b" style="left:962px;top:664.5px;width:864px;height:1px;background:#eceef3;"></div>
<div class="b" style="left:962px;top:644px;width:1px;height:20px;background:#eceef3;"></div>
<div class="b" style="left:1825px;top:644px;width:1px;height:20px;background:#eceef3;"></div>
<div class="t" style="left:968.1px;top:510px;font-size:10.4px;font-weight:700;color:#2d2d2d;letter-spacing:0.957px;">Accordato</div>
<div class="t" style="right:444px;top:510px;font-size:10.1px;color:#5e636a;letter-spacing:0.18px;margin-right:-0.18px;">0,00</div>
<div class="t" style="right:246px;top:510px;font-size:10.1px;color:#5e636a;letter-spacing:0.18px;margin-right:-0.18px;">7.000.000,00</div>
<div class="t" style="right:39.4px;top:510px;font-size:10.1px;color:#5e636a;letter-spacing:0.18px;margin-right:-0.18px;">0,00</div>
<div class="t" style="left:968.1px;top:530px;font-size:10.4px;font-weight:700;color:#2d2d2d;letter-spacing:1.181px;">Quota oneri</div>
<div class="t" style="right:444px;top:530px;font-size:10.1px;color:#5e636a;letter-spacing:0.18px;margin-right:-0.18px;">0,00</div>
<div class="t" style="right:246px;top:530px;font-size:10.1px;color:#5e636a;letter-spacing:0.18px;margin-right:-0.18px;">0,00</div>
<div class="t" style="right:39.4px;top:530px;font-size:10.1px;color:#5e636a;letter-spacing:0.18px;margin-right:-0.18px;">0,00</div>
<div class="t" style="left:968.1px;top:550px;font-size:10.4px;font-weight:700;color:#2d2d2d;letter-spacing:1.016px;">Esposizione</div>
<div class="t" style="right:444px;top:550px;font-size:10.1px;color:#5e636a;letter-spacing:0.18px;margin-right:-0.18px;">0,00</div>
<div class="t" style="right:246px;top:550px;font-size:10.1px;color:#5e636a;letter-spacing:0.18px;margin-right:-0.18px;">2.545.322,68</div>
<div class="t" style="right:39.4px;top:550px;font-size:10.1px;color:#5e636a;letter-spacing:0.18px;margin-right:-0.18px;">0,00</div>
<div class="t" style="left:973.6px;top:570px;font-size:10.3px;color:#5b6067;letter-spacing:0.333px;">di cui emesso entro quota oneri</div>
<div class="t" style="right:444px;top:570px;font-size:10.1px;color:#5e636a;letter-spacing:0.18px;margin-right:-0.18px;">0,00</div>
<div class="t" style="right:246px;top:570px;font-size:10.1px;color:#5e636a;letter-spacing:0.18px;margin-right:-0.18px;">0,00</div>
<div class="t" style="right:39.4px;top:570px;font-size:10.1px;color:#5e636a;letter-spacing:0.18px;margin-right:-0.18px;">0,00</div>
<div class="t" style="left:973.6px;top:590px;font-size:10.3px;color:#5b6067;letter-spacing:0.374px;">di cui su piano di rientro</div>
<div class="t" style="right:444px;top:590px;font-size:10.1px;color:#5e636a;letter-spacing:0.18px;margin-right:-0.18px;">0,00</div>
<div class="t" style="right:246px;top:590px;font-size:10.1px;color:#5e636a;letter-spacing:0.18px;margin-right:-0.18px;">0,00</div>
<div class="t" style="right:39.4px;top:590px;font-size:10.1px;color:#5e636a;letter-spacing:0.18px;margin-right:-0.18px;">0,00</div>
<div class="t" style="left:968.1px;top:610px;font-size:10.4px;font-weight:700;color:#2d2d2d;letter-spacing:1.014px;">Residuo</div>
<div class="t" style="right:444px;top:610px;font-size:10.1px;color:#5e636a;letter-spacing:0.18px;margin-right:-0.18px;">0,00</div>
<div class="t" style="right:246px;top:610px;font-size:10.1px;color:#5e636a;letter-spacing:0.18px;margin-right:-0.18px;">4.454.677,32</div>
<div class="t" style="right:39.4px;top:610px;font-size:10.1px;color:#5e636a;letter-spacing:0.18px;margin-right:-0.18px;">0,00</div>
<div class="t" style="right:444px;top:630px;font-size:8.9px;font-weight:700;color:#222;letter-spacing:0.24px;margin-right:-0.3px;">% Smobilizzo</div>
<div class="t" style="right:246px;top:630px;font-size:8.9px;font-weight:700;color:#222;letter-spacing:0.162px;margin-right:-0.3px;">% Smobilizzo non rico</div>
<div class="t" style="right:39.4px;top:630px;font-size:8.9px;font-weight:700;color:#222;letter-spacing:0.268px;margin-right:-0.3px;">% Smobilizzo effettiva</div>
<div class="t" style="right:444px;top:650px;font-size:10.1px;color:#5e636a;letter-spacing:0.18px;margin-right:-0.18px;">100,000%</div>
<div class="t" style="right:39.4px;top:650px;font-size:10.1px;color:#4a4f9e;letter-spacing:0.18px;margin-right:-0.18px;">98,419%</div>
<div class="t" style="left:86px;top:685px;font-size:11px;font-weight:700;color:#2b2f86;transform:scaleX(0.9934);transform-origin:0 50%;">Netto note credito</div>
<div class="b" style="left:186px;top:683px;width:16px;height:16px;border:1px solid #c7c9d6;border-radius:2px;background:#fff"></div>
<svg style="left:188.5px;top:686px" width="11" height="10" viewBox="0 0 11 10"><path d="M1.2 5.4 L4 8.2 L9.8 1.6" fill="none" stroke="#1a38a5" stroke-width="1.8"/></svg>
<div class="t" style="left:215.2px;top:685px;font-size:11px;font-weight:700;color:#2b2f86;transform:scaleX(0.95);transform-origin:0 50%;">Data scadenza :</div>
<div class="b" style="left:301.0px;top:682.7px;width:15.8px;height:15.8px;border:1px solid #9d9bd0;border-radius:50%;background:#fff"></div>
<div class="b" style="left:304.59999999999997px;top:686.3000000000001px;width:8.6px;height:8.6px;border-radius:50%;background:#1a38a5"></div>
<div class="t" style="left:323.6px;top:685px;font-size:11px;color:#50555c;transform:scaleX(1.0053);transform-origin:0 50%;">Debitore</div>
<div class="b" style="left:374.0px;top:682.7px;width:15.8px;height:15.8px;border:1px solid #9d9bd0;border-radius:50%;background:#fff"></div>
<div class="t" style="left:396.2px;top:685px;font-size:11px;color:#50555c;transform:scaleX(0.8598);transform-origin:0 50%;">DSO</div>
<div class="b" style="left:424.90000000000003px;top:682.7px;width:15.8px;height:15.8px;border:1px solid #9d9bd0;border-radius:50%;background:#fff"></div>
<div class="t" style="left:447.8px;top:685px;font-size:11px;color:#50555c;transform:scaleX(0.9827);transform-origin:0 50%;">Pagamento sotto garanzia</div>
<div class="b" style="left:87px;top:717px;width:566.8px;height:21px;background:#c5d2ec;"></div>
<div class="b" style="left:87px;top:738px;width:565.8px;height:1px;background:#0c0c0c;"></div>
<div class="t" style="left:93.6px;top:723px;font-size:11.6px;font-weight:700;color:#1c1c1c;transform:scaleX(0.9822);transform-origin:0 50%;">AGING CREDITI SCADUTO</div>
<div class="b" style="left:653.8px;top:717px;width:64.1px;height:22px;background:#2e3192;"></div>
<div class="t" style="left:673.8px;top:723px;font-size:10.4px;color:#fff;transform:scaleX(0.9612);transform-origin:0 50%;-webkit-text-stroke:0.2px #fff;">Grafico</div>
<div class="b" style="left:718.9px;top:717px;width:90.1px;height:22px;background:#2e3192;"></div>
<div class="t" style="left:739.2px;top:723px;font-size:10.4px;color:#fff;transform:scaleX(1.0247);transform-origin:0 50%;-webkit-text-stroke:0.2px #fff;">Analisi livelli</div>
<div class="b" style="left:810px;top:717px;width:141.7px;height:22px;background:#2e3192;"></div>
<div class="t" style="left:829.7px;top:723px;font-size:10.4px;color:#fff;transform:scaleX(0.9682);transform-origin:0 50%;-webkit-text-stroke:0.2px #fff;">Analisi mezzo di incasso</div>
<div class="t" style="right:1347.5px;top:744px;font-size:8.9px;font-weight:700;color:#222;letter-spacing:0.51px;margin-right:-0.3px;">Importo</div>
<div class="t" style="right:1161.8px;top:744px;font-size:8.9px;font-weight:700;color:#222;letter-spacing:0.115px;margin-right:-0.3px;">Riconosciuto</div>
<div class="t" style="right:918.4px;top:744px;font-size:8.9px;font-weight:700;color:#222;letter-spacing:0.085px;margin-right:-0.3px;">Non Riconosciuto</div>
<div class="vs" style="left:119px;top:759px;height:19px;background:#f0f1f4"></div>
<div class="vs" style="left:327px;top:759px;height:19px;background:#f0f1f4"></div>
<div class="vs" style="left:519.2px;top:759px;height:19px;background:#f0f1f4"></div>
<div class="vs" style="left:704.2px;top:759px;height:19px;background:#f0f1f4"></div>
<div class="vs" style="left:119px;top:779px;height:20px;background:#f0f1f4"></div>
<div class="vs" style="left:327px;top:779px;height:20px;background:#f0f1f4"></div>
<div class="vs" style="left:519.2px;top:779px;height:20px;background:#f0f1f4"></div>
<div class="vs" style="left:704.2px;top:779px;height:20px;background:#f0f1f4"></div>
<div class="b" style="left:87px;top:799px;width:865px;height:20px;background:#f3f4f6;"></div>
<div class="vs" style="left:119px;top:799px;height:20px;background:#fafbfc"></div>
<div class="vs" style="left:327px;top:799px;height:20px;background:#fafbfc"></div>
<div class="vs" style="left:519.2px;top:799px;height:20px;background:#fafbfc"></div>
<div class="vs" style="left:704.2px;top:799px;height:20px;background:#fafbfc"></div>
<div class="vs" style="left:119px;top:819px;height:20px;background:#f0f1f4"></div>
<div class="vs" style="left:327px;top:819px;height:20px;background:#f0f1f4"></div>
<div class="vs" style="left:519.2px;top:819px;height:20px;background:#f0f1f4"></div>
<div class="vs" style="left:704.2px;top:819px;height:20px;background:#f0f1f4"></div>
<div class="b" style="left:87px;top:839px;width:865px;height:20px;background:#f3f4f6;"></div>
<div class="vs" style="left:119px;top:839px;height:20px;background:#fafbfc"></div>
<div class="vs" style="left:327px;top:839px;height:20px;background:#fafbfc"></div>
<div class="vs" style="left:519.2px;top:839px;height:20px;background:#fafbfc"></div>
<div class="vs" style="left:704.2px;top:839px;height:20px;background:#fafbfc"></div>
<div class="vs" style="left:119px;top:859px;height:20px;background:#f0f1f4"></div>
<div class="vs" style="left:327px;top:859px;height:20px;background:#f0f1f4"></div>
<div class="vs" style="left:519.2px;top:859px;height:20px;background:#f0f1f4"></div>
<div class="vs" style="left:704.2px;top:859px;height:20px;background:#f0f1f4"></div>
<div class="b" style="left:87px;top:879px;width:865px;height:16px;background:#f3f4f6;"></div>
<div class="vs" style="left:119px;top:879px;height:16px;background:#fafbfc"></div>
<div class="vs" style="left:327px;top:879px;height:16px;background:#fafbfc"></div>
<div class="vs" style="left:519.2px;top:879px;height:16px;background:#fafbfc"></div>
<div class="vs" style="left:704.2px;top:879px;height:16px;background:#fafbfc"></div>
<div class="b" style="left:87px;top:758px;width:865px;height:1px;background:#a9a9d6;"></div>
<div class="b" style="left:87px;top:778px;width:865px;height:1px;background:#2fbf8a;"></div>
<div class="b" style="left:91px;top:761px;width:14px;height:14px;background:#c9d6f6;border-radius:2.5px"></div>
<svg style="left:93.3px;top:764.3px" width="9.6" height="8" viewBox="0 0 9 8" preserveAspectRatio="none"><path d="M0.4 1 C1.8 0.4 3.2 0.5 4.2 1.4 V7.6 C3.2 6.8 1.8 6.7 0.4 7.2z M8.6 1 C7.2 0.4 5.8 0.5 4.8 1.4 V7.6 C5.8 6.8 7.2 6.7 8.6 7.2z" fill="#1d4fd8"/></svg>
<div class="t" style="left:124px;top:764px;font-size:9.9px;font-weight:700;color:#1f1f1f;letter-spacing:0.073px;">Totale</div>
<div class="t" style="right:1341.1px;top:764px;font-size:9.7px;font-weight:700;color:#262626;letter-spacing:0.72px;margin-right:-0.72px;">1.729.594,23</div>
<div class="t" style="right:1155.5px;top:764px;font-size:9.7px;font-weight:700;color:#262626;letter-spacing:0.72px;margin-right:-0.72px;">7.396,75</div>
<div class="t" style="right:913.8px;top:764px;font-size:9.7px;font-weight:700;color:#262626;letter-spacing:0.72px;margin-right:-0.72px;">1.722.197,48</div>
<div class="t" style="left:124px;top:784px;font-size:9.7px;color:#5b6067;transform:scaleX(1.0444);transform-origin:0 50%;">Percentuale</div>
<div class="t" style="right:1341.1px;top:784px;font-size:10px;color:#5e636a;letter-spacing:0.02px;margin-right:-0.02px;">66,877%</div>
<div class="t" style="right:913.8px;top:784px;font-size:10px;color:#5e636a;letter-spacing:0.02px;margin-right:-0.02px;">66,591%</div>
<div class="t" style="left:124px;top:804px;font-size:9.7px;color:#5b6067;transform:scaleX(0.9857);transform-origin:0 50%;">Oltre 270 GG</div>
<div class="t" style="right:1341.1px;top:804px;font-size:10px;color:#5e636a;letter-spacing:0.02px;margin-right:-0.02px;">0,00</div>
<div class="t" style="right:1155.5px;top:804px;font-size:10px;color:#5e636a;letter-spacing:0.02px;margin-right:-0.02px;">0,00</div>
<div class="t" style="right:913.8px;top:804px;font-size:10px;color:#5e636a;letter-spacing:0.02px;margin-right:-0.02px;">0,00</div>
<div class="t" style="left:124px;top:824px;font-size:9.7px;color:#5b6067;transform:scaleX(0.9508);transform-origin:0 50%;">Da 181 a 270 GG</div>
<div class="t" style="right:1341.1px;top:824px;font-size:10px;color:#5e636a;letter-spacing:0.02px;margin-right:-0.02px;">0,00</div>
<div class="t" style="right:1155.5px;top:824px;font-size:10px;color:#5e636a;letter-spacing:0.02px;margin-right:-0.02px;">0,00</div>
<div class="t" style="right:913.8px;top:824px;font-size:10px;color:#5e636a;letter-spacing:0.02px;margin-right:-0.02px;">0,00</div>
<div class="t" style="left:124px;top:844px;font-size:9.7px;color:#5b6067;transform:scaleX(0.9412);transform-origin:0 50%;">Da 91 a 180 GG</div>
<div class="t" style="right:1341.1px;top:844px;font-size:10px;color:#5e636a;letter-spacing:0.02px;margin-right:-0.02px;">0,00</div>
<div class="t" style="right:1155.5px;top:844px;font-size:10px;color:#5e636a;letter-spacing:0.02px;margin-right:-0.02px;">0,00</div>
<div class="t" style="right:913.8px;top:844px;font-size:10px;color:#5e636a;letter-spacing:0.02px;margin-right:-0.02px;">0,00</div>
<div class="b" style="left:91px;top:861px;width:14px;height:14px;background:#c9d6f6;border-radius:2.5px"></div>
<svg style="left:93.3px;top:864.3px" width="9.6" height="8" viewBox="0 0 9 8" preserveAspectRatio="none"><path d="M0.4 1 C1.8 0.4 3.2 0.5 4.2 1.4 V7.6 C3.2 6.8 1.8 6.7 0.4 7.2z M8.6 1 C7.2 0.4 5.8 0.5 4.8 1.4 V7.6 C5.8 6.8 7.2 6.7 8.6 7.2z" fill="#1d4fd8"/></svg>
<div class="t" style="left:124px;top:864px;font-size:9.7px;color:#5b6067;transform:scaleX(0.9421);transform-origin:0 50%;">Da 61 a 90 GG</div>
<div class="t" style="right:1341.1px;top:864px;font-size:10px;color:#5e636a;letter-spacing:0.02px;margin-right:-0.02px;">4.743,06</div>
<div class="t" style="right:1155.5px;top:864px;font-size:10px;color:#5e636a;letter-spacing:0.02px;margin-right:-0.02px;">0,00</div>
<div class="t" style="right:913.8px;top:864px;font-size:10px;color:#5e636a;letter-spacing:0.02px;margin-right:-0.02px;">4.743,06</div>
<div class="b" style="left:91px;top:881px;width:14px;height:14px;background:#c9d6f6;border-radius:2.5px"></div>
<svg style="left:93.3px;top:884.3px" width="9.6" height="8" viewBox="0 0 9 8" preserveAspectRatio="none"><path d="M0.4 1 C1.8 0.4 3.2 0.5 4.2 1.4 V7.6 C3.2 6.8 1.8 6.7 0.4 7.2z M8.6 1 C7.2 0.4 5.8 0.5 4.8 1.4 V7.6 C5.8 6.8 7.2 6.7 8.6 7.2z" fill="#1d4fd8"/></svg>
<div class="t" style="left:124px;top:884px;font-size:9.7px;color:#5b6067;transform:scaleX(0.9421);transform-origin:0 50%;">Da 31 a 60 GG</div>
<div class="t" style="right:1341.1px;top:884px;font-size:10px;color:#5e636a;letter-spacing:0.02px;margin-right:-0.02px;">408.398,92</div>
<div class="t" style="right:1155.5px;top:884px;font-size:10px;color:#5e636a;letter-spacing:0.02px;margin-right:-0.02px;">0,00</div>
<div class="t" style="right:913.8px;top:884px;font-size:10px;color:#5e636a;letter-spacing:0.02px;margin-right:-0.02px;">408.398,92</div>
<div class="b" style="left:962px;top:717px;width:565.5999999999999px;height:21px;background:#c5d2ec;"></div>
<div class="b" style="left:962px;top:738px;width:564.5999999999999px;height:1px;background:#0c0c0c;"></div>
<div class="t" style="left:968.6px;top:723px;font-size:11.6px;font-weight:700;color:#1c1c1c;transform:scaleX(0.9687);transform-origin:0 50%;">AGING CREDITI A SCADERE</div>
<div class="b" style="left:1527.6px;top:717px;width:65.2px;height:22px;background:#2e3192;"></div>
<div class="t" style="left:1548.4px;top:723px;font-size:10.4px;color:#fff;transform:scaleX(0.9612);transform-origin:0 50%;-webkit-text-stroke:0.2px #fff;">Grafico</div>
<div class="b" style="left:1594.3px;top:717px;width:88.4px;height:22px;background:#2e3192;"></div>
<div class="t" style="left:1613.6px;top:723px;font-size:10.4px;color:#fff;transform:scaleX(1.0247);transform-origin:0 50%;-webkit-text-stroke:0.2px #fff;">Analisi livelli</div>
<div class="b" style="left:1684px;top:717px;width:142.2px;height:22px;background:#2e3192;"></div>
<div class="t" style="left:1703.9px;top:723px;font-size:10.4px;color:#fff;transform:scaleX(0.9682);transform-origin:0 50%;-webkit-text-stroke:0.2px #fff;">Analisi mezzo di incasso</div>
<div class="t" style="right:494.3px;top:744px;font-size:8.9px;font-weight:700;color:#222;letter-spacing:0.51px;margin-right:-0.3px;">Importo</div>
<div class="t" style="right:299.7px;top:744px;font-size:8.9px;font-weight:700;color:#222;letter-spacing:0.115px;margin-right:-0.3px;">Riconosciuto</div>
<div class="t" style="right:44px;top:744px;font-size:8.9px;font-weight:700;color:#222;letter-spacing:0.085px;margin-right:-0.3px;">Non Riconosciuto</div>
<div class="vs" style="left:993.3px;top:759px;height:19px;background:#f0f1f4"></div>
<div class="vs" style="left:1197.3px;top:759px;height:19px;background:#f0f1f4"></div>
<div class="vs" style="left:1372px;top:759px;height:19px;background:#f0f1f4"></div>
<div class="vs" style="left:1566.2px;top:759px;height:19px;background:#f0f1f4"></div>
<div class="vs" style="left:993.3px;top:779px;height:20px;background:#f0f1f4"></div>
<div class="vs" style="left:1197.3px;top:779px;height:20px;background:#f0f1f4"></div>
<div class="vs" style="left:1372px;top:779px;height:20px;background:#f0f1f4"></div>
<div class="vs" style="left:1566.2px;top:779px;height:20px;background:#f0f1f4"></div>
<div class="b" style="left:962px;top:799px;width:864px;height:20px;background:#f3f4f6;"></div>
<div class="vs" style="left:993.3px;top:799px;height:20px;background:#fafbfc"></div>
<div class="vs" style="left:1197.3px;top:799px;height:20px;background:#fafbfc"></div>
<div class="vs" style="left:1372px;top:799px;height:20px;background:#fafbfc"></div>
<div class="vs" style="left:1566.2px;top:799px;height:20px;background:#fafbfc"></div>
<div class="vs" style="left:993.3px;top:819px;height:20px;background:#f0f1f4"></div>
<div class="vs" style="left:1197.3px;top:819px;height:20px;background:#f0f1f4"></div>
<div class="vs" style="left:1372px;top:819px;height:20px;background:#f0f1f4"></div>
<div class="vs" style="left:1566.2px;top:819px;height:20px;background:#f0f1f4"></div>
<div class="b" style="left:962px;top:839px;width:864px;height:20px;background:#f3f4f6;"></div>
<div class="vs" style="left:993.3px;top:839px;height:20px;background:#fafbfc"></div>
<div class="vs" style="left:1197.3px;top:839px;height:20px;background:#fafbfc"></div>
<div class="vs" style="left:1372px;top:839px;height:20px;background:#fafbfc"></div>
<div class="vs" style="left:1566.2px;top:839px;height:20px;background:#fafbfc"></div>
<div class="vs" style="left:993.3px;top:859px;height:20px;background:#f0f1f4"></div>
<div class="vs" style="left:1197.3px;top:859px;height:20px;background:#f0f1f4"></div>
<div class="vs" style="left:1372px;top:859px;height:20px;background:#f0f1f4"></div>
<div class="vs" style="left:1566.2px;top:859px;height:20px;background:#f0f1f4"></div>
<div class="b" style="left:962px;top:879px;width:864px;height:16px;background:#f3f4f6;"></div>
<div class="vs" style="left:993.3px;top:879px;height:16px;background:#fafbfc"></div>
<div class="vs" style="left:1197.3px;top:879px;height:16px;background:#fafbfc"></div>
<div class="vs" style="left:1372px;top:879px;height:16px;background:#fafbfc"></div>
<div class="vs" style="left:1566.2px;top:879px;height:16px;background:#fafbfc"></div>
<div class="b" style="left:962px;top:758px;width:864px;height:1px;background:#a9a9d6;"></div>
<div class="b" style="left:962px;top:778px;width:864px;height:1px;background:#2fbf8a;"></div>
<div class="b" style="left:966px;top:761px;width:14px;height:14px;background:#c9d6f6;border-radius:2.5px"></div>
<svg style="left:968.3px;top:764.3px" width="9.6" height="8" viewBox="0 0 9 8" preserveAspectRatio="none"><path d="M0.4 1 C1.8 0.4 3.2 0.5 4.2 1.4 V7.6 C3.2 6.8 1.8 6.7 0.4 7.2z M8.6 1 C7.2 0.4 5.8 0.5 4.8 1.4 V7.6 C5.8 6.8 7.2 6.7 8.6 7.2z" fill="#1d4fd8"/></svg>
<div class="t" style="left:998.3px;top:764px;font-size:9.9px;font-weight:700;color:#1f1f1f;letter-spacing:0.073px;">Totale</div>
<div class="t" style="right:488px;top:764px;font-size:9.7px;font-weight:700;color:#262626;letter-spacing:0.72px;margin-right:-0.72px;">856.623,55</div>
<div class="t" style="right:293.3px;top:764px;font-size:9.7px;font-weight:700;color:#262626;letter-spacing:0.72px;margin-right:-0.72px;">7.850,14</div>
<div class="t" style="right:39.4px;top:764px;font-size:9.7px;font-weight:700;color:#262626;letter-spacing:0.72px;margin-right:-0.72px;">848.773,41</div>
<div class="t" style="left:998.3px;top:784px;font-size:9.7px;color:#5b6067;transform:scaleX(1.0444);transform-origin:0 50%;">Percentuale</div>
<div class="t" style="right:488px;top:784px;font-size:10px;color:#5e636a;letter-spacing:0.02px;margin-right:-0.02px;">33,122%</div>
<div class="t" style="right:293.3px;top:784px;font-size:10px;color:#5e636a;letter-spacing:0.02px;margin-right:-0.02px;">0,303%</div>
<div class="b" style="left:966px;top:801px;width:14px;height:14px;background:#c9d6f6;border-radius:2.5px"></div>
<svg style="left:968.3px;top:804.3px" width="9.6" height="8" viewBox="0 0 9 8" preserveAspectRatio="none"><path d="M0.4 1 C1.8 0.4 3.2 0.5 4.2 1.4 V7.6 C3.2 6.8 1.8 6.7 0.4 7.2z M8.6 1 C7.2 0.4 5.8 0.5 4.8 1.4 V7.6 C5.8 6.8 7.2 6.7 8.6 7.2z" fill="#1d4fd8"/></svg>
<div class="t" style="left:998.3px;top:804px;font-size:9.7px;color:#5b6067;transform:scaleX(0.9595);transform-origin:0 50%;">Fino a 30 GG</div>
<div class="t" style="right:488px;top:804px;font-size:10px;color:#5e636a;letter-spacing:0.02px;margin-right:-0.02px;">603.359,49</div>
<div class="t" style="right:293.3px;top:804px;font-size:10px;color:#5e636a;letter-spacing:0.02px;margin-right:-0.02px;">7.850,14</div>
<div class="t" style="right:39.4px;top:804px;font-size:10px;color:#5e636a;letter-spacing:0.02px;margin-right:-0.02px;">595.509,35</div>
<div class="b" style="left:966px;top:821px;width:14px;height:14px;background:#c9d6f6;border-radius:2.5px"></div>
<svg style="left:968.3px;top:824.3px" width="9.6" height="8" viewBox="0 0 9 8" preserveAspectRatio="none"><path d="M0.4 1 C1.8 0.4 3.2 0.5 4.2 1.4 V7.6 C3.2 6.8 1.8 6.7 0.4 7.2z M8.6 1 C7.2 0.4 5.8 0.5 4.8 1.4 V7.6 C5.8 6.8 7.2 6.7 8.6 7.2z" fill="#1d4fd8"/></svg>
<div class="t" style="left:998.3px;top:824px;font-size:9.7px;color:#5b6067;transform:scaleX(0.9421);transform-origin:0 50%;">Da 31 a 60 GG</div>
<div class="t" style="right:488px;top:824px;font-size:10px;color:#5e636a;letter-spacing:0.02px;margin-right:-0.02px;">253.264,06</div>
<div class="t" style="right:293.3px;top:824px;font-size:10px;color:#5e636a;letter-spacing:0.02px;margin-right:-0.02px;">0,00</div>
<div class="t" style="right:39.4px;top:824px;font-size:10px;color:#5e636a;letter-spacing:0.02px;margin-right:-0.02px;">253.264,06</div>
<div class="t" style="left:998.3px;top:844px;font-size:9.7px;color:#5b6067;transform:scaleX(0.9421);transform-origin:0 50%;">Da 61 a 90 GG</div>
<div class="t" style="right:488px;top:844px;font-size:10px;color:#5e636a;letter-spacing:0.02px;margin-right:-0.02px;">0,00</div>
<div class="t" style="right:293.3px;top:844px;font-size:10px;color:#5e636a;letter-spacing:0.02px;margin-right:-0.02px;">0,00</div>
<div class="t" style="right:39.4px;top:844px;font-size:10px;color:#5e636a;letter-spacing:0.02px;margin-right:-0.02px;">0,00</div>
<div class="t" style="left:998.3px;top:864px;font-size:9.7px;color:#5b6067;transform:scaleX(0.9412);transform-origin:0 50%;">Da 91 a 180 GG</div>
<div class="t" style="right:488px;top:864px;font-size:10px;color:#5e636a;letter-spacing:0.02px;margin-right:-0.02px;">0,00</div>
<div class="t" style="right:293.3px;top:864px;font-size:10px;color:#5e636a;letter-spacing:0.02px;margin-right:-0.02px;">0,00</div>
<div class="t" style="right:39.4px;top:864px;font-size:10px;color:#5e636a;letter-spacing:0.02px;margin-right:-0.02px;">0,00</div>
<div class="t" style="left:998.3px;top:884px;font-size:9.7px;color:#5b6067;transform:scaleX(0.9787);transform-origin:0 50%;">Oltre 180 GG</div>
<div class="t" style="right:488px;top:884px;font-size:10px;color:#5e636a;letter-spacing:0.02px;margin-right:-0.02px;">0,00</div>
<div class="t" style="right:293.3px;top:884px;font-size:10px;color:#5e636a;letter-spacing:0.02px;margin-right:-0.02px;">0,00</div>
<div class="t" style="right:39.4px;top:884px;font-size:10px;color:#5e636a;letter-spacing:0.02px;margin-right:-0.02px;">0,00</div>
<div class="b" style="left:66px;top:895px;width:1791px;height:17px;background:#f4f6fc;"></div>
</body></html>
